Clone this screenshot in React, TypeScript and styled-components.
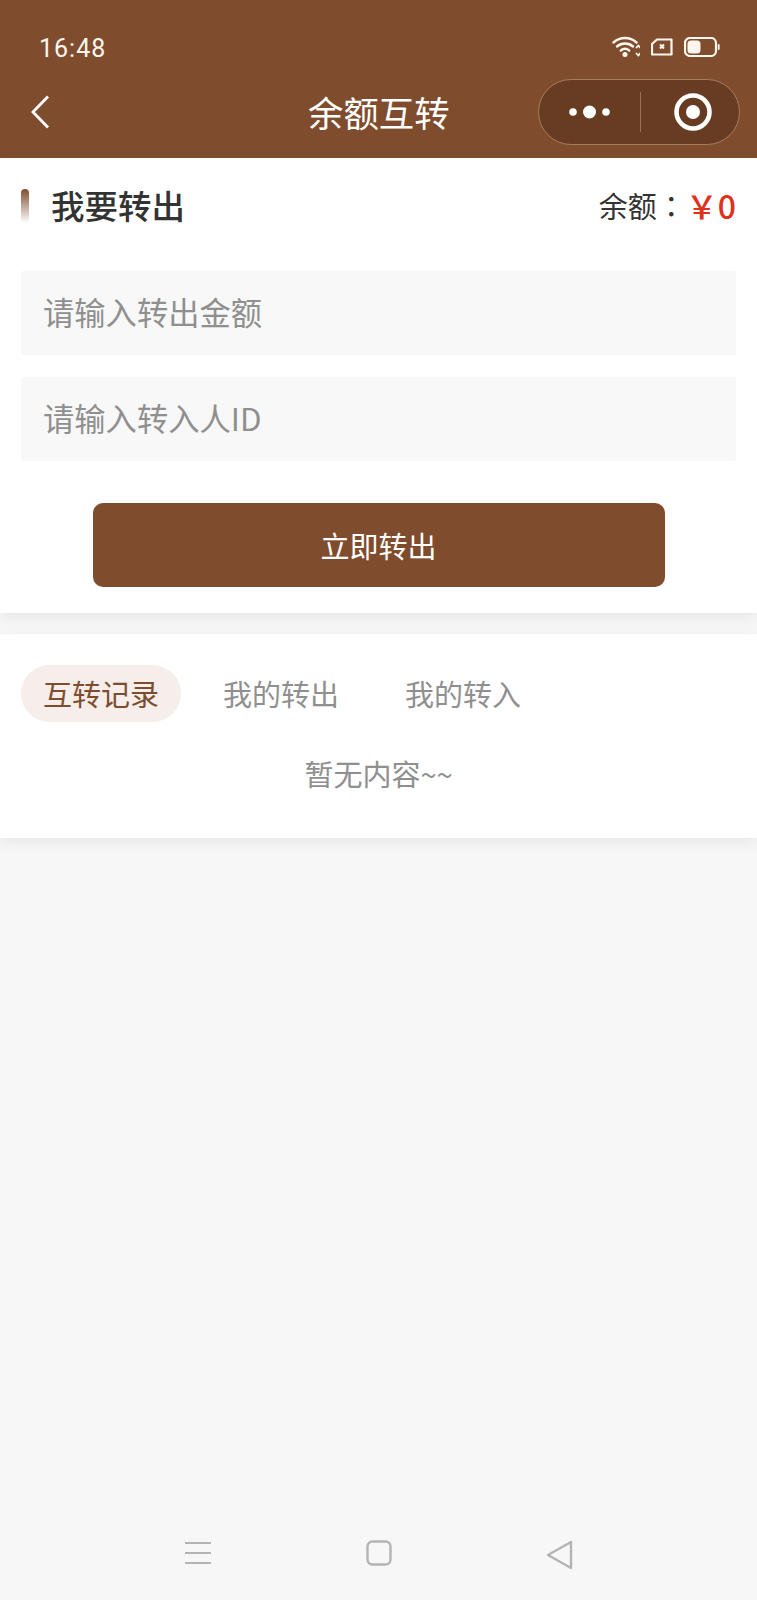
import styled, { createGlobalStyle } from "styled-components";

const BROWN = "#7f4d2e";
const TABS = ["互转记录", "我的转出", "我的转入"];

const GlobalStyle = createGlobalStyle`
    html, body {
        margin: 0;
        padding: 0;
    }
    body {
        background: #f7f7f7;
        font-family: "Noto Sans CJK SC", "Noto Sans", sans-serif;
    }
`;

const App = () => {
    return (
        <Page>
            <GlobalStyle />
            <TopBar>
                <StatusBar>
                    <Clock>16:48</Clock>
                    <StatusIcons>
                        <svg width="28" height="22" viewBox="0 0 28 22" fill="none" stroke="#fff7ee" strokeLinecap="round">
                            <path d="M1.500 6.500C8 .5 18 .5 24.500 6.500" strokeWidth="2.400" />
                            <path d="M5 10.500c4.600-4 11.400-4 16 0" strokeWidth="2.400" />
                            <path d="M8.800 14.500c2.500-2 5.900-2 8.400 0" strokeWidth="2.400" />
                            <circle cx="13" cy="18.500" r="2.500" fill="#fff7ee" stroke="none" />
                            <path d="M24.500 11.500l1.800-2 1.700 2M24.500 17.500l1.800 2 1.700-2" strokeWidth="1.800" />
                        </svg>
                        <svg width="22" height="18" viewBox="0 0 22 18" fill="none" stroke="#fff7ee">
                            <path d="M6 1.500h14.500v15h-19.500v-10.500z" strokeWidth="2.200" strokeLinejoin="round" />
                            <path d="M9 6.500l4 4M13 6.500l-4 4" strokeWidth="2" />
                        </svg>
                        <svg width="36" height="20" viewBox="0 0 36 20" fill="none">
                            <rect x="1" y="1" width="31" height="18" rx="5" stroke="#fff7ee" strokeWidth="2.200" />
                            <rect x="3.500" y="3.500" width="13" height="13" rx="3.500" fill="#fff7ee" />
                            <rect x="33.800" y="7" width="1.800" height="6" rx="0.900" fill="#fff7ee" />
                        </svg>
                    </StatusIcons>
                </StatusBar>
                <NavBar>
                    <BackButton>
                        <svg width="20" height="34" viewBox="0 0 20 34" fill="none" stroke="#fff" strokeWidth="2.800">
                            <path d="M18 1.500L3 17l15 15.500" />
                        </svg>
                    </BackButton>
                    <NavTitle>余额互转</NavTitle>
                    <Capsule>
                        <MenuPart>
                            <svg width="41" height="14" viewBox="0 0 41 14" fill="#fff">
                                <circle cx="4" cy="7" r="3.800" />
                                <circle cx="20.500" cy="7" r="6.500" />
                                <circle cx="37" cy="7" r="3.800" />
                            </svg>
                        </MenuPart>
                        <CapsuleLine />
                        <RecordPart>
                            <svg width="38" height="38" viewBox="0 0 38 38">
                                <circle cx="19" cy="19" r="16.500" fill="none" stroke="#fff" strokeWidth="4.600" />
                                <circle cx="19" cy="19" r="7" fill="#fff" />
                            </svg>
                        </RecordPart>
                    </Capsule>
                </NavBar>
            </TopBar>

            <TransferCard>
                <CardHead>
                    <HeadTitle>
                        <TitleMark />
                        <Title>我要转出</Title>
                    </HeadTitle>
                    <Balance>
                        余额<Colon>：</Colon>
                        <Money>￥0</Money>
                    </Balance>
                </CardHead>
                <Field>请输入转出金额</Field>
                <Field>请输入转入人ID</Field>
                <SubmitButton>立即转出</SubmitButton>
            </TransferCard>

            <RecordCard>
                <Tabs>
                    {TABS.map((tab, idx) => (
                        <Tab key={tab} $active={idx === 0}>
                            {tab}
                        </Tab>
                    ))}
                </Tabs>
                <Empty>暂无内容~~</Empty>
            </RecordCard>

            <SystemBar>
                <svg width="28" height="26" viewBox="0 0 28 26" stroke="#b4b4b4" strokeWidth="2">
                    <path d="M1 3h26M1 13h26M1 23h26" />
                </svg>
                <svg width="26" height="26" viewBox="0 0 26 26" fill="none" stroke="#b4b4b4" strokeWidth="2.400">
                    <rect x="1.500" y="1.500" width="23" height="23" rx="5" />
                </svg>
                <svg width="27" height="30" viewBox="0 0 27 30" fill="none" stroke="#b4b4b4" strokeWidth="2.400" strokeLinejoin="round">
                    <path d="M25 2L2 15l23 13z" />
                </svg>
            </SystemBar>
        </Page>
    );
};

const Page = styled.div`
    width: 757px;
    height: 1600px;
    display: flex;
    flex-direction: column;
    background: #f7f7f7;
    overflow: hidden;
`;
const TopBar = styled.header`
    height: 158px;
    padding: 0 17px 0 39px;
    box-sizing: border-box;
    flex-shrink: 0;
    background: ${BROWN};
    color: #fff;
`;
const StatusBar = styled.div`
    height: 79px;
    padding: 18px 20px 0 0;
    box-sizing: border-box;
    display: flex;
    align-items: center;
    justify-content: space-between;
`;
const Clock = styled.span`
    font-family: "Roboto", sans-serif;
    font-size: 25px;
    letter-spacing: 1px;
    color: #fff7ee;
`;
const StatusIcons = styled.div`
    display: flex;
    align-items: center;
    gap: 11px;
    margin-top: -4px;
`;
const NavBar = styled.nav`
    height: 66px;
    display: flex;
    align-items: center;
    justify-content: space-between;
    position: relative;
`;
const BackButton = styled.div`
    width: 22px;
    display: flex;
    margin-left: -9px;
`;
const NavTitle = styled.h1`
    position: absolute;
    left: 269px;
    margin: 0;
    font-size: 35.400px;
    font-weight: 400;
    line-height: 66px;
`;
const Capsule = styled.div`
    width: 202px;
    height: 66px;
    box-sizing: border-box;
    display: flex;
    align-items: center;
    border: 1px solid #a67c60;
    border-radius: 33px;
    background: #673c22;
`;
const MenuPart = styled.div`
    width: 101px;
    display: flex;
    justify-content: center;
    align-items: center;
`;
const RecordPart = styled.div`
    flex: 1;
    padding-left: 33px;
    display: flex;
    align-items: center;
`;
const CapsuleLine = styled.div`
    width: 1px;
    height: 40px;
    background: #9a7054;
`;
const TransferCard = styled.section`
    height: 455px;
    padding: 0 21px;
    box-sizing: border-box;
    flex-shrink: 0;
    background: #fff;
    display: flex;
    flex-direction: column;
    box-shadow: 0 4px 14px rgba(0, 0, 0, 0.07);
`;
const CardHead = styled.div`
    height: 113px;
    padding-bottom: 20px;
    box-sizing: border-box;
    display: flex;
    align-items: center;
    justify-content: space-between;
`;
const HeadTitle = styled.div`
    display: flex;
    align-items: center;
    gap: 22px;
`;
const TitleMark = styled.i`
    width: 8px;
    height: 34px;
    margin-top: 3px;
    border-radius: 4px;
    background: linear-gradient(180deg, ${BROWN}, #fff);
`;
const Title = styled.h2`
    margin: 0;
    font-size: 33.500px;
    font-weight: 500;
    color: #333;
`;
const Balance = styled.div`
    font-size: 29px;
    color: #333;
    display: flex;
    align-items: center;
`;
const Colon = styled.span`
    font-family: "Noto Sans CJK TC", sans-serif;
`;
const Money = styled.span`
    color: #e0301e;
    font-size: 32px;
    font-weight: 500;
`;
const Field = styled.div`
    height: 84px;
    margin-bottom: 22px;
    padding-left: 22px;
    flex-shrink: 0;
    border-radius: 2px;
    background: #f8f8f8;
    color: #8f8f8f;
    font-size: 31.300px;
    line-height: 82px;
`;
const SubmitButton = styled.button`
    width: 572px;
    height: 84px;
    margin: 20px auto 0;
    border: 0;
    border-radius: 10px;
    background: ${BROWN};
    color: #fff;
    font-family: inherit;
    font-size: 29px;
    flex-shrink: 0;
`;
const RecordCard = styled.section`
    height: 204px;
    margin-top: 21px;
    padding: 31px 21px 0;
    box-sizing: border-box;
    flex-shrink: 0;
    background: #fff;
    box-shadow: 0 4px 14px rgba(0, 0, 0, 0.07);
`;
const Tabs = styled.div`
    display: flex;
    gap: 42px;
`;
const Tab = styled.div<{ $active: boolean }>`
    width: 160px;
    height: 57px;
    border-radius: 29px;
    text-align: center;
    font-size: 29px;
    line-height: 57px;
    background: ${(props) => (props.$active ? "#f5eeea" : "transparent")};
    color: ${(props) => (props.$active ? BROWN : "#8f8f8f")};

    &:nth-child(2) {
        width: 116px;
    }
    &:nth-child(3) {
        width: 116px;
        margin-left: 24px;
    }
`;
const Empty = styled.div`
    margin-top: 29px;
    text-align: center;
    font-size: 29px;
    line-height: 44px;
    color: #8f8f8f;
`;
const SystemBar = styled.footer`
    margin-top: auto;
    height: 94px;
    padding: 34px 184px 0 184px;
    box-sizing: border-box;
    display: flex;
    align-items: flex-start;
    justify-content: space-between;
`;

export default App;
